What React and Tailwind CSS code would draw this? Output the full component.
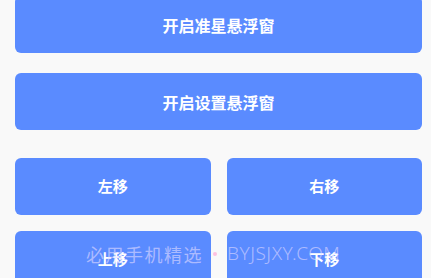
import React from 'react';

const cjk = { fontFamily: '"Noto Sans CJK SC", "Noto Sans", sans-serif' };

function Btn({ label, small }) {
  return (
    <button
      className={`h-[57px] w-full rounded-[6px] bg-[#5a8bff] text-white font-bold flex items-center justify-center ${
        small ? 'text-[15px]' : 'text-[16px]'
      }`}
    >
      {label}
    </button>
  );
}

export default function App() {
  return (
    <div className="relative w-[431px] h-[278px] overflow-hidden bg-[#f9f9f9]" style={cjk}>
      <div className="flex flex-col pl-[15px] pr-[9px] -mt-[4px]">
        <Btn label="开启准星悬浮窗" />
        <div className="mt-[20px]">
          <Btn label="开启设置悬浮窗" />
        </div>
        <div className="mt-[28px] grid grid-cols-2 gap-x-[16px] gap-y-[16px]">
          <Btn label="左移" small />
          <Btn label="右移" small />
          <Btn label="上移" small />
          <Btn label="下移" small />
        </div>
      </div>

      {/* watermark */}
      <div className="absolute left-[86px] top-[244px] flex items-center leading-none text-[#e4dcff]/60 pointer-events-none whitespace-nowrap">
        <span className="text-[18px] tracking-[1.5px]">必用手机精选</span>
        <span className="mx-[10px] w-[4px] h-[4px] rounded-full bg-[#ffb3d9]/80" />
        <span style={{ fontFamily: '"Noto Sans", sans-serif' }} className="text-[19px] font-light tracking-[0.5px]">
          BYJSJXY.COM
        </span>
      </div>
    </div>
  );
}
